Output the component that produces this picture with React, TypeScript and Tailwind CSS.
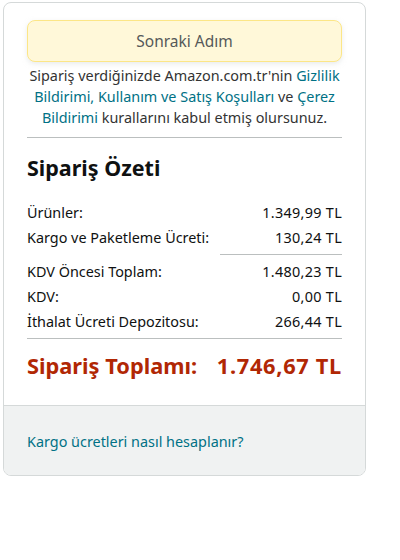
export default function App() {
  const font = { fontFamily: '"Noto Sans", "Open Sans", sans-serif' };
  return (
    <div className="w-[400px] h-[560px] bg-white" style={font}>
      <div className="ml-[3px] mt-[2px] w-[363px] rounded-lg border border-[#d5d9d9] overflow-hidden">
        <div className="px-[23px] pt-[17px]">
          <button className="w-full h-[42px] pt-[2px] rounded-lg bg-[#fff8d9] border border-[#fce687] text-[15.5px] text-[#565959] shadow-[0_2px_5px_rgba(213,217,217,0.5)]">
            Sonraki Adım
          </button>
          <p className="mt-[3px] text-center text-[14.4px] leading-[21px] text-[#333]">
            Sipariş verdiğinizde Amazon.com.tr'nin <span className="text-[#007185]">Gizlilik Bildirimi,</span> <span className="text-[#007185]">Kullanım ve Satış Koşulları</span> ve <span className="text-[#007185]">Çerez Bildirimi</span> kurallarını kabul etmiş olursunuz.
          </p>
          <div className="mt-[9px] border-t border-[#bbbfbf]" />
          <h2 className="mt-[16px] text-[21.5px] font-bold text-[#0f1111] leading-[28px]">Sipariş Özeti</h2>
          <div className="mt-[18px] text-[14.4px] text-[#0f1111] leading-[19px]">
            <div className="flex justify-between py-[3px]"><span>Ürünler:</span><span className="tracking-[0.3px]">1.349,99 TL</span></div>
            <div className="flex justify-between py-[3px]"><span>Kargo ve Paketleme Ücreti:</span><span className="tracking-[0.3px]">130,24 TL</span></div>
            <div className="flex justify-end mt-[4px]"><div className="w-[122px] border-t border-[#bbbfbf]" /></div>
            <div className="flex justify-between py-[3px] mt-[4px]"><span>KDV Öncesi Toplam:</span><span className="tracking-[0.3px]">1.480,23 TL</span></div>
            <div className="flex justify-between py-[3px]"><span>KDV:</span><span className="tracking-[0.3px]">0,00 TL</span></div>
            <div className="flex justify-between py-[3px]"><span>İthalat Ücreti Depozitosu:</span><span className="tracking-[0.3px]">266,44 TL</span></div>
            <div className="mt-[4px] border-t border-[#bbbfbf]" />
          </div>
          <div className="flex justify-between mt-[13px] mb-[25px] text-[21.8px] font-bold text-[#b12704] leading-[28px]">
            <span>Sipariş Toplamı:</span><span className="tracking-[0.7px]">1.746,67 TL</span>
          </div>
        </div>
        <div className="bg-[#f0f2f2] border-t border-[#d5d9d9] px-[23px] h-[70px] flex items-center">
          <span className="text-[14.4px] text-[#007185] pt-[3px]">Kargo ücretleri nasıl hesaplanır?</span>
        </div>
      </div>
    </div>
  );
}
